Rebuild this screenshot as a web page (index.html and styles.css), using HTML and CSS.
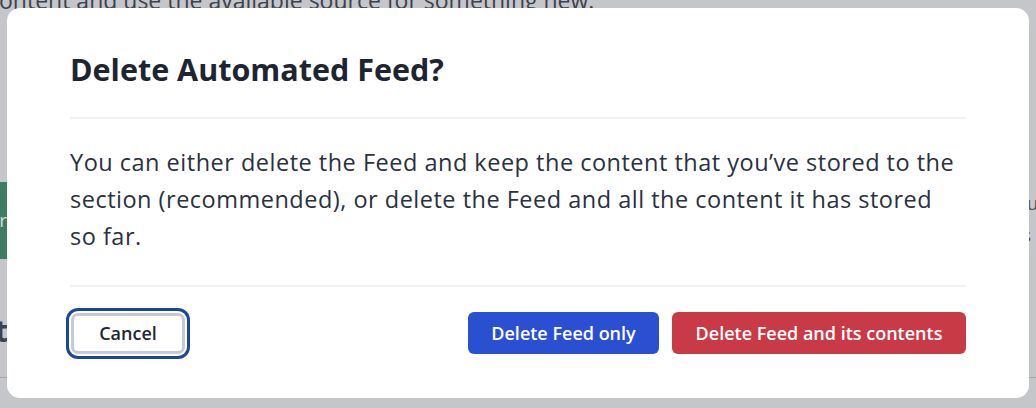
FILE: index.html
```html
<!DOCTYPE html>
<html lang="en">
<head>
<meta charset="utf-8">
<title>Delete Automated Feed?</title>
<link rel="stylesheet" href="styles.css">
</head>
<body>
<div class="page">
  <div class="bg">
    <p class="bg-top">content and use the available source for something new.</p>
    <div class="bg-row">
      <div class="bg-left">
        <p class="bg-line l1">a</p>
        <p class="bg-line l2">u</p>
        <p class="bg-line l3">n</p>
        <div class="bg-green">r</div>
        <p class="bg-head">t</p>
      </div>
      <div class="bg-right">
        <p class="bg-line r1">lu</p>
        <p class="bg-line r2">s</p>
      </div>
    </div>
    <div class="bg-rule"></div>
  </div>

  <div class="overlay">
    <div class="modal" role="dialog" aria-labelledby="dlg-title">
      <h2 id="dlg-title" class="modal-title">Delete Automated Feed?</h2>
      <hr class="divider">
      <p class="modal-body">You can either delete the Feed and keep the content that you’ve stored to the section (recommended), or delete the Feed and all the content it has stored so far.</p>
      <hr class="divider divider-2">
      <div class="modal-actions">
        <button class="btn btn-cancel">Cancel</button>
        <div class="actions-right">
          <button class="btn btn-primary">Delete Feed only</button>
          <button class="btn btn-danger">Delete Feed and its contents</button>
        </div>
      </div>
    </div>
  </div>
</div>
</body>
</html>
```

FILE: styles.css
```css
* { box-sizing: border-box; }
html, body { margin: 0; padding: 0; }
body {
  font-family: "Open Sans", "Noto Sans", sans-serif;
  width: 1036px;
  height: 408px;
  overflow: hidden;
}
.page {
  position: relative;
  width: 1036px;
  height: 408px;
  overflow: hidden;
  background: #c4c6ca;
}
.bg {
  color: #4a505c;
}
.bg-top {
  margin: -13px 0 0 -12px;
  font-size: 23px;
  line-height: 26px;
  color: #3c424d;
  white-space: nowrap;
}
.bg-row {
  display: flex;
  justify-content: space-between;
}
.bg-left {
  width: 40px;
  margin-left: -11px;
  display: flex;
  flex-direction: column;
}
.bg-line { margin: 0; font-size: 19px; line-height: 32px; }
.l1 { margin-top: 19px; }
.l3 { margin-top: 18px; }
.bg-green {
  margin-top: 36px;
  width: 18px;
  height: 77px;
  background: #3f7b62;
  color: #d5ddd9;
  font-size: 19px;
  line-height: 77px;
  text-align: right;
}
.bg-head {
  margin: 52px 0 0 0;
  padding-left: 6px;
  font-size: 30px;
  line-height: 40px;
  font-weight: 700;
  color: #3c4250;
}
.bg-right {
  width: 40px;
  margin-right: -26px;
  padding-top: 174px;
}
.r1, .r2 { font-size: 19px; line-height: 32px; }
.bg-rule {
  position: absolute;
  left: 0; right: 0; top: 377px;
  height: 1px;
  background: #a3a6ac;
}

.overlay {
  position: absolute;
  inset: 0;
}
.modal {
  position: absolute;
  left: 7px;
  top: 8px;
  width: 1022px;
  height: 390px;
  background: #ffffff;
  border-radius: 13px;
  padding: 41px 63px 0 63px;
  color: #1f2633;
}
.modal-title {
  margin: 0;
  font-size: 30.5px;
  line-height: 40px;
  font-weight: 700;
  color: #1e2532;
}
.divider {
  border: 0;
  height: 2px;
  background: #f2f2f6;
  margin: 28px 0 0 0;
}
.modal-body {
  margin: 25px 0 0 0;
  max-width: 890px;
  font-size: 23.5px;
  line-height: 37px;
  letter-spacing: 0.5px;
  color: #2a3140;
}
.divider-2 { margin-top: 30px; }
.modal-actions {
  margin-top: 25px;
  display: flex;
  justify-content: space-between;
  align-items: center;
}
.actions-right { display: flex; gap: 13px; }
.btn {
  font-family: inherit;
  font-size: 18px;
  font-weight: 600;
  height: 42px;
  border-radius: 6px;
  border: 0;
  padding: 0;
  cursor: pointer;
}
.btn-cancel {
  margin-left: 1px;
  width: 114px;
  height: 41px;
  background: #fff;
  color: #1f2633;
  border: 3px solid #c5cbd5;
  box-shadow: 0 0 0 2px #fff, 0 0 0 5px #1c469c;
  border-radius: 7px;
}
.btn-primary {
  width: 191px;
  background: #2b4fd1;
  color: #fff;
}
.btn-danger {
  width: 294px;
  background: #c83a45;
  color: #fff;
}
```
